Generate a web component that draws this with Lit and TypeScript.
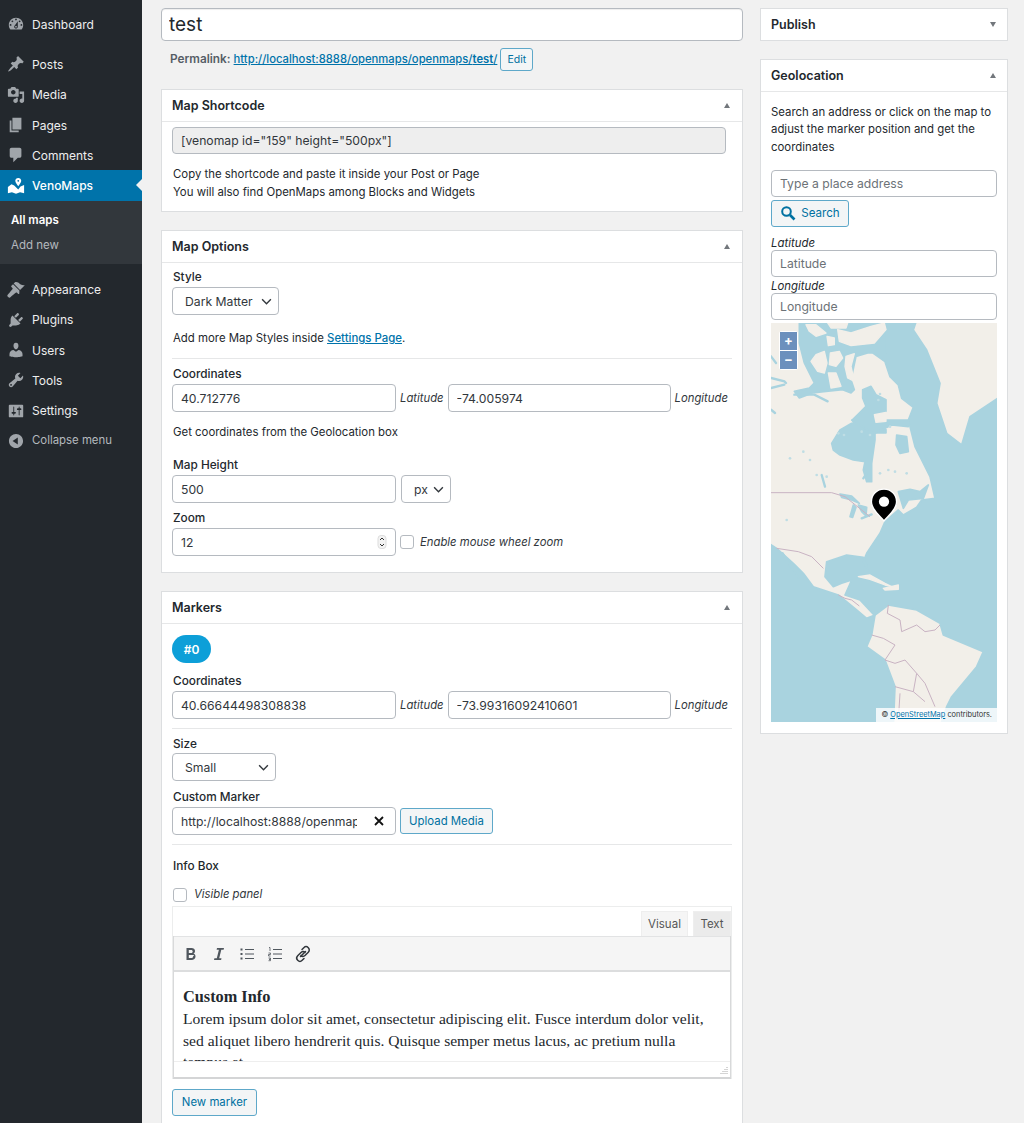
import { LitElement, html, css, svg } from 'lit'
import { customElement } from 'lit/decorators.js'

const icons: Record<string, string> = {
  dashboard: 'M3.76 16h12.48c1.1-1.37 1.76-3.11 1.76-5 0-4.42-3.58-8-8-8s-8 3.58-8 8c0 1.89.66 3.63 1.76 5zM10 4c.55 0 1 .45 1 1s-.45 1-1 1-1-.45-1-1 .45-1 1-1zM6 6c.55 0 1 .45 1 1s-.45 1-1 1-1-.45-1-1 .45-1 1-1zm8 0c.55 0 1 .45 1 1s-.45 1-1 1-1-.45-1-1 .45-1 1-1zm-5.37 5.55L12 7v6c0 1.1-.9 2-2 2s-2-.9-2-2c0-.57.24-1.08.63-1.45zM4 10c.55 0 1 .45 1 1s-.45 1-1 1-1-.45-1-1 .45-1 1-1zm12 0c.55 0 1 .45 1 1s-.45 1-1 1-1-.45-1-1 .45-1 1-1zm-5 3c0-.55-.45-1-1-1s-1 .45-1 1 .45 1 1 1 1-.45 1-1z',
  post: 'M10.44 3.02l1.82-1.82 6.36 6.35-1.83 1.82c-1.05-.68-2.48-.57-3.41.36l-.75.75c-.92.93-1.04 2.35-.35 3.41l-1.83 1.82-2.41-2.41-2.8 2.79c-.42.42-3.38 2.71-3.8 2.29s1.86-3.39 2.28-3.81l2.79-2.79L4.1 9.36l1.83-1.82c1.05.69 2.48.57 3.4-.36l.75-.75c.93-.92 1.05-2.35.36-3.41z',
  media: 'M13 11V4c0-.55-.45-1-1-1h-1.67L9 1H5L3.67 3H2c-.55 0-1 .45-1 1v7c0 .55.45 1 1 1h10c.55 0 1-.45 1-1zM7 4.5c1.38 0 2.5 1.12 2.5 2.5S8.38 9.5 7 9.5 4.5 8.38 4.5 7 5.62 4.5 7 4.5zM14 6h5v10.5c0 1.38-1.12 2.5-2.5 2.5S14 17.88 14 16.5s1.12-2.5 2.5-2.5c.17 0 .34.02.5.05V9h-3V6zm-4 8.05V13h2v3.5c0 1.38-1.12 2.5-2.5 2.5S7 17.88 7 16.5 8.12 14 9.5 14c.17 0 .34.02.5.05z',
  page: 'M6 15V2h10v13H6zm-1 1h8v2H3V5h2v11z',
  comments: 'M5 2h9c1.1 0 2 .9 2 2v7c0 1.1-.9 2-2 2h-2l-5 5v-5H5c-1.1 0-2-.9-2-2V4c0-1.1.9-2 2-2z',
  venomaps: 'M12.5 1c1.900 0 3.300 1.400 3.300 3.200 0 1.700-1.700 4-3.300 6-1.600-2-3.300-4.300-3.300-6C9.200 2.400 10.600 1 12.500 1zm0 2.200a1 1 0 100 2 1 1 0 000-2zM1 11l4-3 3 1.500 4.500 4.500L15 10.500l4-1.500v9l-4.500-1-4.500 1.500-4.500-1.500L1 18z',
  appearance: 'M14.48 11.06L7.41 3.99l1.5-1.5c.5-.56 2.3-.47 3.51.32 1.21.8 1.43 1.28 2.91 2.1 1.18.64 2.45 1.26 4.45.85zm-.71.71L6.7 4.7 4.93 6.47c-.39.39-.39 1.02 0 1.41l1.06 1.06c.39.39.39 1.03 0 1.42-.6.6-4.4 5.47-5.35 6.42-.68.68.01 1.33.69 1.99.68.68 1.31 1.37 1.99.69.95-.95 5.82-4.75 6.42-5.35.39-.39 1.03-.39 1.42 0l1.06 1.06c.39.39 1.02.39 1.41 0z',
  plugins: 'M13.11 4.36L9.87 7.6 8 5.73l3.24-3.24c.35-.34 1.05-.2 1.56.32.52.51.66 1.21.31 1.55zm-8 1.77l.91-1.12 9.01 9.01-1.19.84c-.71.71-2.63 1.16-3.82 1.16H6.14L4.9 17.26c-.59.59-1.54.59-2.12 0-.59-.58-.59-1.53 0-2.12l1.24-1.24v-3.88c0-1.13.4-3.19 1.09-3.89zm7.26 3.97l3.24-3.24c.34-.35 1.04-.21 1.55.31.52.51.66 1.21.31 1.55l-3.24 3.25z',
  users: 'M10 9.25c-2.27 0-2.73-3.44-2.73-3.44C7 4.02 7.82 2 9.97 2c2.16 0 2.98 2.02 2.71 3.81 0 0-.41 3.44-2.68 3.44zm0 2.57L12.72 10c2.39 0 4.52 2.33 4.52 4.53v2.49s-3.65 1.13-7.24 1.13c-3.65 0-7.24-1.13-7.24-1.13v-2.49c0-2.25 1.94-4.48 4.47-4.48z',
  tools: 'M16.68 9.77c-1.34 1.34-3.3 1.67-4.95.99l-5.41 6.52c-.99.99-2.59.99-3.58 0s-.99-2.59 0-3.57l6.52-5.42c-.68-1.65-.35-3.61.99-4.95 1.28-1.28 3.12-1.62 4.72-1.06l-2.89 2.89 2.82 2.82 2.86-2.87c.53 1.58.18 3.39-1.08 4.65zM3.81 16.21c.4.39 1.04.39 1.43 0 .4-.4.4-1.04 0-1.43-.39-.4-1.03-.4-1.43 0-.39.39-.39 1.03 0 1.43z',
  settings: 'M18 16V4c0-.55-.45-1-1-1H3c-.55 0-1 .45-1 1v12c0 .55.45 1 1 1h14c.55 0 1-.45 1-1zM8 11h1c.55 0 1 .45 1 1s-.45 1-1 1H8v1.5c0 .28-.22.5-.5.5s-.5-.22-.5-.5V13H6c-.55 0-1-.45-1-1s.45-1 1-1h1V5.5c0-.28.22-.5.5-.5s.5.22.5.5V11zm5-2h-1c-.55 0-1-.45-1-1s.45-1 1-1h1V5.5c0-.28.22-.5.5-.5s.5.22.5.5V7h1c.55 0 1 .45 1 1s-.45 1-1 1h-1v5.5c0 .28-.22.5-.5.5s-.5-.22-.5-.5V9z',
  collapse: 'M10 2.16c4.33 0 7.84 3.51 7.84 7.84s-3.51 7.84-7.84 7.84S2.16 14.33 2.16 10 5.71 2.16 10 2.16zm2 11.72V6.12L6.18 9.97z',
}

const icon = (name: string) =>
  html`<svg class="ico" viewBox="0 0 20 20"><path fill-rule="evenodd" d=${icons[name]}></path></svg>`

const chevron = html`<svg class="chev" viewBox="0 0 12 8"><path d="M1 1.5l5 5 5-5" fill="none" stroke="#32373c" stroke-width="1.6"></path></svg>`

// map shapes, in 3x page units. "north" and "east" lists were read off two crops, so they carry an offset
const shift = (pts: number[], dx: number, dy: number) => {
  const out: string[] = []
  for (let i = 0; i < pts.length; i += 2) out.push(`${pts[i] + dx},${pts[i + 1] + dy}`)
  return out.join(' ')
}
const north = (pts: number[]) => shift(pts, 3, 9)
const east = (pts: number[]) => shift(pts, 150, 300)

const sea = [
  // Atlantic and Baffin Bay
  '300,0 440,0 430,30 470,90 510,190 500,250 530,340 575,375 600,290 690,230 700,1220 510,1220 530,1160 545,1130 620,1040 640,995 520,945 510,910 440,870 355,855 315,885 312,885 270,840 225,825 245,780 215,790 190,800 165,770 170,725 230,705 280,712 295,752 280,725 290,700 330,640 345,605 385,570 400,585 440,562 455,540 495,535 480,470 435,380 415,300 430,262 395,235 385,195 360,170 345,125 310,100',
  // Pacific
  '0,672 20,685 70,730 100,760 130,800 205,825 260,870 290,895 315,885 305,945 290,980 345,1020 375,1100 370,1220 0,1220',
]

const water = [
  north([85,0, 345,0, 345,90, 290,90, 255,100, 240,170, 250,200, 240,210, 215,200, 165,205, 125,210, 85,225, 70,205, 115,195, 130,180, 100,120, 85,60]),
  north([275,200, 300,190, 315,215, 345,230, 345,265, 310,275, 310,300, 345,320, 345,330, 255,330, 245,290, 265,270, 285,250, 275,225]),
  east([35,70, 60,30, 95,10, 140,15, 165,40, 165,60, 160,95, 155,130, 155,185, 140,185, 130,150, 135,125, 100,120, 60,105, 40,90]),
  east([95,0, 110,12, 165,40, 215,15, 265,20, 265,0]),
  east([230,45, 260,50, 265,95, 240,100, 228,75]),
  east([235,215, 270,208, 300,215, 325,195, 310,235, 265,240, 250,265]),
  east([60,222, 95,228, 118,250, 95,240, 65,232]),
  east([115,255, 140,262, 138,288, 125,275]),
  east([100,255, 108,262, 98,292, 90,290]),
]

const islands = [
  north([105,5, 135,5, 165,30, 135,40, 115,25]),
  north([200,20, 240,30, 300,10, 340,0, 345,20, 310,60, 240,68, 205,55]),
  north([170,0, 230,0, 225,15, 180,15]),
  north([135,95, 160,85, 168,120, 160,150, 140,145, 120,115]),
  north([178,90, 205,85, 215,105, 195,130, 175,125]),
  north([172,150, 195,150, 210,190, 180,195]),
  north([225,100, 250,92, 240,130, 250,175, 230,165, 222,130]),
  north([168,40, 190,45, 190,65, 172,68]),
  north([310,275, 345,268, 345,295, 315,298]),
  // Cuba, Hispaniola
  '265,770 300,765 345,790 365,800 345,795 300,778',
  '340,805 385,795 385,808 345,810',
]

const channels = [
  north([0,165, 40,175, 45,180]),
  north([0,195, 40,185]),
  north([0,100, 15,120]),
  north([70,215, 130,215, 170,235]),
  east([5,165, 15,200]),
  east([125,295, 155,283]),
  east([130,175, 140,160]),
  north([0,260, 12,270]),
  // Gulf of California
  '38,700 60,735 85,772',
]

const specks = [
  [140,465], [170,470], [60,415], [100,395], [120,420], [330,460], [355,450], [375,455], [410,460],
  [325,240], [330,222], [360,320], [50,600], [205,340], [222,345], [300,345], [275,335],
]

const borders = [
  '0,518 185,518 225,530 300,590',
  '20,685 85,695 125,710 160,745',
  '205,825 225,835 245,840 268,858',
  '355,855 352,880 390,900 395,935 440,915 465,935 495,930 510,915',
  '305,945 340,955 375,975 345,1020 375,1030 405,1020 440,1060 465,1090 495,1160',
  '375,1100 430,1115 465,1145',
  '390,1120 385,1200',
  '440,1060 430,1115',
]

const mapArt = svg`
  <rect x="0" y="0" width="700" height="1220" fill="#f2efe9"></rect>
  <g fill="#a9d3df" stroke="#a9d3df" stroke-width="5" stroke-linejoin="round">
    ${sea.map((p) => svg`<polygon points=${p}></polygon>`)}
    ${water.map((p) => svg`<polygon points=${p}></polygon>`)}
  </g>
  <g fill="#f2efe9" stroke="#f2efe9" stroke-width="4" stroke-linejoin="round">
    ${islands.map((p) => svg`<polygon points=${p}></polygon>`)}
  </g>
  ${channels.map((p) => svg`<polyline points=${p} fill="none" stroke="#a9d3df" stroke-width="7" stroke-linecap="round"></polyline>`)}
  ${specks.map(([x, y]) => svg`<circle cx=${x} cy=${y} r="4" fill="#bfdde4"></circle>`)}
  ${borders.map((p) => svg`<polyline points=${p} fill="none" stroke="#c9b3c3" stroke-width="3"></polyline>`)}
`

const menuTop = [['dashboard', 'Dashboard']]
const menuMain = [['post', 'Posts'], ['media', 'Media'], ['page', 'Pages'], ['comments', 'Comments']]
const menuLow = [['appearance', 'Appearance'], ['plugins', 'Plugins'], ['users', 'Users'], ['tools', 'Tools'], ['settings', 'Settings']]

@customElement('app-root')
export class AppRoot extends LitElement {
  static styles = css`
    :host {
      display: block;
      height: 1123px;
      overflow: hidden;
      background: #f1f1f1;
      color: #23282d;
      font: 11.4px/17px Inter, "Noto Sans", sans-serif;
    }
    * { box-sizing: border-box; }
    .page { display: flex; height: 1123px; }

    .t1 { margin-top: 1px; } .t2 { margin-top: 2px; } .t3 { margin-top: 3px; }
    .t6 { margin-top: 6px; } .t7 { margin-top: 7px; } .t8 { margin-top: 8px; }
    .t9 { margin-top: 9px; } .t10 { margin-top: 10px; } .t11 { margin-top: 11px; }
    .t12 { margin-top: 12px; } .t13 { margin-top: 13px; } .t15 { margin-top: 15px; } .t16 { margin-top: 16px; }

    .side { width: 142px; flex: none; background: #23282d; padding-top: 9px; font-size: 12px; }
    .item { display: flex; align-items: center; height: 30.3px; padding-left: 7px; color: #eee; }
    .item span { margin-left: 7px; }
    .ico { width: 18px; height: 18px; fill: #a0a5aa; flex: none; }
    .gap { height: 10px; }
    .item.cur { position: relative; background: #0073aa; color: #fff; font-weight: 500; }
    .item.cur .ico { fill: #fff; }
    .item.cur::after {
      content: ''; position: absolute; right: 0; top: 9px;
      border: 6px solid transparent; border-right-color: #f1f1f1; border-left: 0;
    }
    .sub { background: #32373c; padding: 7px 0; height: 63.5px; margin-bottom: 10px; font-size: 11.5px; color: #b4b9be; }
    .sub div { height: 25px; line-height: 24px; padding-left: 11px; }
    .sub .on { color: #fff; font-weight: 600; }
    .collapse { color: #b4b9be; font-size: 11.4px; }

    .main { width: 582px; margin-left: 19px; padding-top: 8px; flex: none; }
    .rail { width: 248px; margin-left: 17px; padding-top: 8px; flex: none; }

    input, select {
      font: 12.2px/17px Inter, "Noto Sans", sans-serif; color: #32373c; background: #fff;
      border: 1px solid #b5bac0; border-radius: 4px;
      height: 28px; padding: 0 8px; margin: 0; outline: 0;
      appearance: none; -webkit-appearance: none; display: block; width: 100%;
    }
    select { padding-left: 12px; }
    input::placeholder { color: #6c7277; opacity: 1; }
    .title { height: 33px; font-size: 19px; color: #23282d; padding: 0 7px; box-shadow: inset 0 1px 1px #eee; }
    .perma { display: flex; align-items: center; height: 23px; margin: 7px 0 18px 9px; color: #555d66; }
    .perma b { font-size: 11.8px; font-weight: 600; margin-right: 3px; }
    a { color: #0073aa; text-decoration: underline; }
    .perma a { font-size: 11.25px; font-weight: 500; }
    .perma strong { font-weight: 600; }
    .btn {
      display: inline-flex; align-items: center; justify-content: center;
      color: #0071a1; border: 1px solid #5ea8c9; border-radius: 3px; background: #f3f5f6; font-size: 11.4px;
    }
    .perma .btn { width: 33px; height: 23px; margin-left: 3px; font-size: 10.5px; }
    .upload { width: 93px; height: 26px; }
    .new { width: 85px; height: 27px; margin-top: 10px; }

    .card { background: #fff; border: 1px solid #dcdee0; margin-bottom: 18px; }
    .card > h2 {
      display: flex; justify-content: space-between; align-items: center;
      margin: 0; height: 32px; padding: 0 12px 0 10px; font-size: 12.5px; font-weight: 600;
      border-bottom: 1px solid #e6e7e8; color: #23282d;
    }
    .rail .card > h2 { padding-right: 11px; }
    .rail .card > h2.closed { height: 31px; border-bottom: 0; }
    .tri { width: 0; height: 0; border-left: 3.5px solid transparent; border-right: 3.5px solid transparent; }
    .tri.up { border-bottom: 5px solid #72777c; }
    .tri.down { border-top: 5px solid #72777c; }
    .body { padding: 0 10px; }
    .body.markers { padding-bottom: 20px; }
    .txt { padding-left: 1px; }
    .label { font-size: 11.8px; font-weight: 500; line-height: 16px; padding-left: 1px; }
    .hr { border-top: 1px solid #e6e7e8; }
    .row { display: flex; align-items: center; gap: 4px; }
    .row.wide { gap: 5px; }
    .row em { white-space: nowrap; color: #32373c; font-size: 11.3px; }
    .row em.after { margin-left: 2px; }
    .w224 { width: 224px; flex: none; }
    .w223 { width: 223px; flex: none; }
    .sel { position: relative; flex: none; }
    .chev { position: absolute; right: 7px; top: 11px; width: 11px; height: 7px; }
    .check { width: 14px; height: 14px; flex: none; border: 1px solid #b5bac0; border-radius: 3px; background: #fff; }
    .setlink { font-weight: 500; }
    .spacer { height: 16px; }

    .short input { background: #eee; width: 554px; height: 27px; margin-top: 5px; }
    .short p { margin: 11px 0 10px; line-height: 18px; padding-left: 1px; }

    .pill {
      width: 39px; height: 28px; margin-top: 11px; border-radius: 14px;
      background: #0d9fd8; color: #fff; font-weight: 600; font-size: 12px;
      display: flex; align-items: center; justify-content: center;
    }
    .clear { position: relative; }
    .clear input { padding-right: 38px; }
    .clear svg { position: absolute; right: 12px; top: 9px; width: 10px; height: 10px; }
    .spin { position: relative; }
    .spin svg { position: absolute; right: 9px; top: 7px; width: 10px; height: 14px; }
    .panel { gap: 7px; padding-left: 1px; }

    .editor { margin-top: 3px; height: 173px; border: 1px solid #eceded; border-bottom: 0; }
    .tabs { display: flex; justify-content: flex-end; gap: 5px; height: 29px; padding-top: 4px; font-size: 11.5px; }
    .tabs div { height: 25px; display: flex; align-items: center; justify-content: center; color: #555; background: #f5f5f5; border: 1px solid #eee; border-bottom: 0; }
    .tabs .v { width: 47px; }
    .tabs .t { width: 38px; background: #ebebeb; }
    .frame { border: 1px solid #d8d9da; border-top: 0; border-bottom: 2px solid #d4d5d6; }
    .tools { height: 36px; background: #f5f5f5; border-top: 1px solid #e2e3e4; border-bottom: 2px solid #dcddde; display: flex; align-items: center; padding-left: 7px; gap: 8px; }
    .tools svg { width: 20px; height: 20px; }
    .content {
      height: 89px; overflow: hidden; padding: 14px 9px 0;
      font: 15.6px/21.5px "Liberation Serif", serif; color: #23282d;
    }
    .content b { display: block; font-size: 16.3px; line-height: 22px; }
    .status { height: 16px; border-top: 1px solid #eee; background: #fff; position: relative; }
    .status svg { position: absolute; right: 2px; bottom: 2px; width: 9px; height: 9px; }

    .geo p { margin: 12px 0 14px; line-height: 17.3px; }
    .geo input { width: 226px; height: 27px; }
    .search { width: 78px; height: 27px; margin-top: 3px; gap: 5px; font-size: 11.6px; }
    .search svg { width: 16px; height: 16px; }
    .geo em { display: block; line-height: 14px; font-size: 11.4px; color: #23282d; }
    .map { position: relative; width: 226px; height: 399px; margin: 3px 0 11px; overflow: hidden; }
    .map > svg.art { display: block; width: 226px; height: 399px; }
    .zoom {
      position: absolute; left: 8px; top: 8px; width: 19px; height: 39px;
      background: #fff; border-radius: 3px; padding: 1px; display: grid; grid-template-rows: 1fr 1fr; gap: 1px;
    }
    .zoom div { background: #6c90bd; color: #fff; font-weight: 700; font-size: 13px; display: flex; align-items: center; justify-content: center; line-height: 1; }
    .pin { position: absolute; left: 99px; top: 165px; width: 28px; height: 34px; }
    .attrib { position: absolute; right: 0; bottom: 0; background: rgba(255,255,255,.8); font-size: 7.4px; line-height: 14px; padding: 0 5px; white-space: nowrap; color: #333; }
  `

  private coords(lat: string, lng: string) {
    return html`<div class="row t2">
      <input class="w224" .value=${lat} />
      <em>Latitude</em>
      <input class="w223" .value=${lng} />
      <em>Longitude</em>
    </div>`
  }

  private select(value: string, width: number) {
    return html`<div class="sel" style="width:${width}px">
      <select><option>${value}</option></select>${chevron}
    </div>`
  }

  private sidebar() {
    const row = ([ic, label]: string[]) => html`<div class="item">${icon(ic)}<span>${label}</span></div>`
    return html`<nav class="side">
      ${menuTop.map(row)}
      <div class="gap"></div>
      ${menuMain.map(row)}
      <div class="item cur">${icon('venomaps')}<span>VenoMaps</span></div>
      <div class="sub"><div class="on">All maps</div><div>Add new</div></div>
      ${menuLow.map(row)}
      <div class="item collapse">${icon('collapse')}<span>Collapse menu</span></div>
    </nav>`
  }

  private toolbar() {
    return html`<div class="tools">
      <svg viewBox="0 0 20 20"><path fill="#50575e" fill-rule="evenodd" d="M6 4h5c2 0 3.500 1 3.500 3 0 1.300-.7 2.200-1.700 2.600 1.300.3 2.200 1.400 2.200 2.900 0 2.300-1.700 3.500-4 3.500H6zm2.300 2v3h2.400c1 0 1.500-.6 1.500-1.500S11.700 6 10.700 6zm0 5v3h2.700c1 0 1.600-.6 1.600-1.500S14.400 11 13.400 11z" transform="translate(-.5 0)"></path></svg>
      <svg viewBox="0 0 20 20"><path fill="#50575e" d="M8 4h7l-.4 1.800h-2.300L10.200 14.200h2.300L12.100 16H5l.4-1.800h2.400L9.900 5.800H7.600z"></path></svg>
      <svg viewBox="0 0 20 20"><path fill="none" stroke="#50575e" stroke-width="1.100" d="M8 5.500h9M8 10h9M8 14.500h9"></path><path fill="#50575e" d="M3.500 4.500h2v2h-2zM3.500 9h2v2h-2zM3.500 13.500h2v2h-2z"></path></svg>
      <svg viewBox="0 0 20 20"><path fill="none" stroke="#50575e" stroke-width="1.100" d="M8 5.500h9M8 10h9M8 14.500h9"></path><path fill="none" stroke="#50575e" stroke-width=".8" d="M4 3.500h1v3.500M3.500 9h2v1.500h-2V12h2M3.500 14h2v1.300h-1.500 1.500v1.400h-2"></path></svg>
      <svg viewBox="0 0 20 20"><path fill="none" stroke="#32373c" stroke-width="1.500" stroke-linecap="round" d="M7.500 12.500l5-5M9 5.500l1.800-1.800c1.300-1.300 3.200-1.300 4.500 0s1.300 3.200 0 4.500l-3.300 3.300c-1.200 1.200-3 1.200-4.100.1M11 14.500l-1.800 1.800c-1.300 1.300-3.200 1.300-4.500 0s-1.300-3.200 0-4.500L8 8.500c1.200-1.200 3-1.200 4.100-.1"></path></svg>
    </div>`
  }

  render() {
    return html`<div class="page">
      ${this.sidebar()}
      <main class="main">
        <input class="title" .value=${'test'} />
        <div class="perma">
          <b>Permalink:</b>
          <a href="#">http://localhost:8888/openmaps/openmaps/<strong>test</strong>/</a>
          <span class="btn">Edit</span>
        </div>

        <section class="card short">
          <h2>Map Shortcode<i class="tri up"></i></h2>
          <div class="body">
            <input .value=${'[venomap id="159" height="500px"]'} />
            <p>Copy the shortcode and paste it inside your Post or Page<br />You will also find OpenMaps among Blocks and Widgets</p>
          </div>
        </section>

        <section class="card opts">
          <h2>Map Options<i class="tri up"></i></h2>
          <div class="body">
            <div class="label t6">Style</div>
            <div class="t2">${this.select('Dark Matter', 107)}</div>
            <div class="txt t15">Add more Map Styles inside <a class="setlink" href="#">Settings Page</a>.</div>
            <div class="hr t11"></div>
            <div class="label t7">Coordinates</div>
            ${this.coords('40.712776', '-74.005974')}
            <div class="txt t12">Get coordinates from the Geolocation box</div>
            <div class="label t16">Map Height</div>
            <div class="row wide t2">
              <input class="w224" .value=${'500'} />
              ${this.select('px', 50)}
            </div>
            <div class="label t7">Zoom</div>
            <div class="row t2">
              <div class="spin w224">
                <input .value=${'12'} />
                <svg viewBox="0 0 10 14"><rect x="1" y=".5" width="8" height="13" rx="3" fill="#f3f3f3" stroke="#ddd"></rect><path d="M3 5l2-2 2 2M3 9l2 2 2-2" fill="none" stroke="#333"></path></svg>
              </div>
              <i class="check"></i>
              <em class="after">Enable mouse wheel zoom</em>
            </div>
            <div class="spacer"></div>
          </div>
        </section>

        <section class="card">
          <h2>Markers<i class="tri up"></i></h2>
          <div class="body markers">
            <div class="pill">#0</div>
            <div class="label t10">Coordinates</div>
            ${this.coords('40.66644498308838', '-73.99316092410601')}
            <div class="hr t9"></div>
            <div class="label t7">Size</div>
            <div class="t1">${this.select('Small', 104)}</div>
            <div class="label t8">Custom Marker</div>
            <div class="row t2">
              <div class="clear w224">
                <input .value=${'http://localhost:8888/openmaps/marker.png'} />
                <svg viewBox="0 0 10 10"><path d="M1 1l8 8M9 1l-8 8" stroke="#111" stroke-width="1.800"></path></svg>
              </div>
              <span class="btn upload">Upload Media</span>
            </div>
            <div class="hr t9"></div>
            <div class="label t13">Info Box</div>
            <div class="row panel t12">
              <i class="check"></i><em>Visible panel</em>
            </div>
            <div class="editor">
              <div class="tabs"><div class="v">Visual</div><div class="t">Text</div></div>
              <div class="frame">
                ${this.toolbar()}
                <div class="content"><b>Custom Info</b>Lorem ipsum dolor sit amet, consectetur adipiscing elit. Fusce interdum dolor velit, sed aliquet libero hendrerit quis. Quisque semper metus lacus, ac pretium nulla tempus at.</div>
                <div class="status"><svg viewBox="0 0 9 9"><path d="M8 1v7M6 3v5M4 5v3M2 7v1" stroke="#aaa" stroke-dasharray="1 1"></path></svg></div>
              </div>
            </div>
            <span class="btn new">New marker</span>
          </div>
        </section>
      </main>

      <aside class="rail">
        <section class="card">
          <h2 class="closed">Publish<i class="tri down"></i></h2>
        </section>
        <section class="card geo">
          <h2>Geolocation<i class="tri up"></i></h2>
          <div class="body">
            <p>Search an address or click on the map to adjust the marker position and get the coordinates</p>
            <input placeholder="Type a place address" />
            <span class="btn search">
              <svg viewBox="0 0 16 16"><circle cx="6.500" cy="6.500" r="4.300" fill="none" stroke="#0071a1" stroke-width="2"></circle><path d="M10 10l4.500 4.500" stroke="#0071a1" stroke-width="2.600"></path></svg>
              Search
            </span>
            <em class="t9">Latitude</em>
            <input placeholder="Latitude" />
            <em class="t2">Longitude</em>
            <input placeholder="Longitude" />
            <div class="map">
              <svg class="art" viewBox="3 9 678 1197">${mapArt}</svg>
              <div class="zoom"><div>+</div><div>−</div></div>
              <svg class="pin" viewBox="0 0 30 36">
                <path d="M15 1C7.300 1 1.500 7 1.500 14.500 1.500 23 10 29 15 35c5-6 13.500-12 13.500-20.500C28.500 7 22.700 1 15 1z" fill="#000" stroke="#fff" stroke-width="1.500"></path>
                <circle cx="15" cy="14.500" r="5.500" fill="#fff"></circle>
              </svg>
              <div class="attrib">© <a href="#">OpenStreetMap</a> contributors.</div>
            </div>
          </div>
        </section>
      </aside>
    </div>`
  }
}

declare global {
  interface HTMLElementTagNameMap {
    'app-root': AppRoot
  }
}
